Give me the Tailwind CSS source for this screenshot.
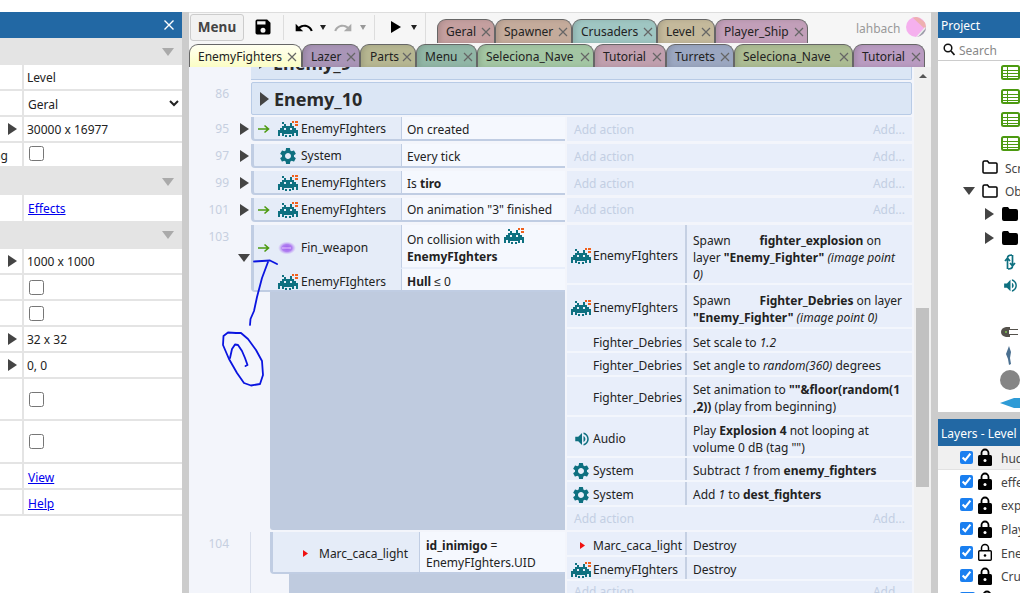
<!DOCTYPE html>
<html lang="en">
<head>
<meta charset="UTF-8">
<title>Event sheet</title>
<script src="https://cdn.jsdelivr.net/npm/@tailwindcss/browser@4"></script>
</head>
<body class="w-[1020px] h-[593px] overflow-hidden bg-white text-[#222] text-[12px] font-['Noto_Sans',sans-serif]">
<!-- shared icons -->
<svg class="hidden">
  <symbol id="invader" viewBox="0 0 20 16">
    <path fill="#0e7080" shape-rendering="crispEdges" d="M4 1h2v2H4zM12 2h2v1h-2zM6 3h2v2H6zM12 3h2v2h-2zM4 5h12v2H4zM2 7h4v2H2zM8 7h4v2H8zM14 7h4v2h-4zM0 9h20v3H0zM0 12h2v3H0zM4 12h12v1H4zM18 12h2v3h-2zM4 13h2v2H4zM14 13h2v2h-2zM7 14h2v2H7zM11 14h2v2h-2z"/>
    <path fill="#f0601c" shape-rendering="crispEdges" d="M14 0h2v2h-2zM17 0h3v2h-3zM17 3h3v2h-3z"/>
  </symbol>
  <symbol id="gear" viewBox="0 0 24 24">
    <path fill="#0e7080" d="M19.14 12.94c.04-.3.06-.61.06-.94 0-.32-.02-.64-.07-.94l2.03-1.58a.49.49 0 0 0 .12-.61l-1.92-3.32a.488.488 0 0 0-.59-.22l-2.39.96c-.5-.38-1.03-.7-1.62-.94l-.36-2.54a.484.484 0 0 0-.48-.41h-3.84c-.24 0-.43.17-.47.41l-.36 2.54c-.59.24-1.13.57-1.62.94l-2.39-.96c-.22-.08-.47 0-.59.22L2.74 8.87c-.12.21-.08.47.12.61l2.03 1.58c-.05.3-.09.63-.09.94s.02.64.07.94l-2.03 1.58a.49.49 0 0 0-.12.61l1.92 3.32c.12.22.37.29.59.22l2.39-.96c.5.38 1.03.7 1.62.94l.36 2.54c.05.24.24.41.48.41h3.84c.24 0 .44-.17.47-.41l.36-2.54c.59-.24 1.13-.56 1.62-.94l2.39.96c.22.08.47 0 .59-.22l1.92-3.32c.12-.22.07-.47-.12-.61l-2.01-1.58zM12 15.6c-1.98 0-3.6-1.62-3.6-3.6s1.62-3.6 3.6-3.6 3.6 1.62 3.6 3.6-1.62 3.6-3.6 3.6z"/>
  </symbol>
  <symbol id="speaker" viewBox="0 0 24 24">
    <path fill="#0e7080" d="M3 9v6h4l5 5V4L7 9H3zM16.5 12c0-1.77-1.02-3.29-2.5-4.03v8.05c1.48-.73 2.5-2.25 2.5-4.02zM14 3.23v2.06c2.89.86 5 3.54 5 6.71s-2.11 5.85-5 6.71v2.06c4.01-.91 7-4.49 7-8.77s-2.99-7.86-7-8.77z"/>
  </symbol>
  <symbol id="arrow" viewBox="0 0 12 10">
    <path fill="none" stroke="#4c9a10" stroke-width="1.600" d="M0 5h10M6.500 1.500 10.500 5l-4 3.500"/>
  </symbol>
  <symbol id="table" viewBox="0 0 19 15">
    <rect x="1" y="1" width="17" height="13" rx="1.500" fill="#fff" stroke="#4c9a10" stroke-width="2"/>
    <path fill="#4c9a10" d="M2 5h15v1H2zM2 8h15v1H2zM2 11h15v1H2zM6 2h1v11H6z"/>
  </symbol>
  <symbol id="folder" viewBox="0 0 16 14">
    <path fill="#fff" stroke="#000" stroke-width="1.500" d="M1 2.500Q1 1 2.500 1h3L7 3h7q1 0 1 1v8q0 1-1 1H2q-1 0-1-1z"/>
  </symbol>
  <symbol id="folder-full" viewBox="0 0 16 14">
    <path fill="#000" d="M0 2q0-2 2-2h4l1.500 2H14q2 0 2 2v8q0 2-2 2H2q-2 0-2-2z"/>
  </symbol>
  <symbol id="lock" viewBox="0 0 14 18">
    <path fill="none" stroke="#000" stroke-width="1.800" d="M3.500 8V5a3.500 3.500 0 0 1 7 0v3"/>
    <rect x="0" y="7" width="14" height="11" rx="1.500" fill="#000"/>
    <circle cx="7" cy="12.500" r="1.500" fill="#fff"/>
  </symbol>
  <symbol id="lock-open" viewBox="0 0 14 18">
    <path fill="none" stroke="#000" stroke-width="1.500" d="M3.500 8V5a3.500 3.500 0 0 1 7 0v3"/>
    <rect x=".7" y="7.700" width="12.600" height="9.600" rx="1" fill="#fff" stroke="#000" stroke-width="1.400"/>
    <circle cx="7" cy="12.500" r="1.300" fill="#000"/>
  </symbol>
  <symbol id="close" viewBox="0 0 10 10">
    <path fill="none" stroke="#666" stroke-width="1.200" d="M1 1l8 8M9 1l-8 8"/>
  </symbol>
</svg>

<div class="relative flex flex-col h-full">
  <div class="h-[12px] shrink-0 bg-white"></div>
  <div class="flex flex-1 min-h-0">

    <!-- properties bar -->
    <aside class="w-[182px] shrink-0 flex flex-col">
      <div class="h-[26px] bg-[#2268a4] flex items-center justify-end pr-[8px]">
        <svg class="w-[10px] h-[10px]" viewBox="0 0 10 10"><path fill="none" stroke="#fff" stroke-width="1.400" d="M.5.5l9 9M9.500.5l-9 9"/></svg>
      </div>
      <div class="h-[27px] bg-[#e4e4e4] flex items-center justify-end pr-[8px]"><span class="border-x-[6px] border-x-transparent border-t-[8px] border-t-[#aaa]"></span></div>
      <div class="h-[26px] flex border-b-2 border-[#e4e4e4]"><div class="w-[24px] border-r-2 border-[#e4e4e4]"></div><div class="pl-[3px] pt-[2px] flex items-center">Level</div></div>
      <div class="h-[26px] flex border-b-2 border-[#e4e4e4]"><div class="w-[24px] border-r-2 border-[#e4e4e4]"></div><select class="flex-1 min-w-0 pl-0 pt-[2px] outline-none"><option>Geral</option></select></div>
      <div class="h-[26px] flex border-b-2 border-[#e4e4e4]"><div class="w-[24px] border-r-2 border-[#e4e4e4] flex items-center justify-end pr-[5px]"><span class="border-y-[6px] border-y-transparent border-l-[9px] border-l-[#444]"></span></div><div class="pl-[3px] pt-[2px] flex items-center">30000 x 16977</div></div>
      <div class="h-[25px] flex border-b-2 border-[#e4e4e4]"><div class="w-[24px] border-r-2 border-[#e4e4e4] flex items-center justify-end pr-[14px] pt-[2px] overflow-hidden"><span class="whitespace-nowrap">ing</span></div><div class="pl-[5px] pb-[3px] flex items-center"><input type="checkbox" class="w-[15px] h-[15px] m-0"></div></div>
      <div class="h-[27px] bg-[#e4e4e4] flex items-center justify-end pr-[8px]"><span class="border-x-[6px] border-x-transparent border-t-[8px] border-t-[#aaa]"></span></div>
      <div class="h-[26px] flex"><div class="w-[24px] border-r-2 border-[#e4e4e4]"></div><div class="pl-[4px] pt-[2px] flex items-center"><a href="#" class="text-[#0000ee] underline">Effects</a></div></div>
      <div class="h-[28px] bg-[#e4e4e4] flex items-center justify-end pr-[8px]"><span class="border-x-[6px] border-x-transparent border-t-[8px] border-t-[#aaa]"></span></div>
      <div class="h-[26px] flex border-b-2 border-[#e4e4e4]"><div class="w-[24px] border-r-2 border-[#e4e4e4] flex items-center justify-end pr-[5px]"><span class="border-y-[6px] border-y-transparent border-l-[9px] border-l-[#444]"></span></div><div class="pl-[3px] pt-[2px] flex items-center">1000 x 1000</div></div>
      <div class="h-[26px] flex border-b-2 border-[#e4e4e4]"><div class="w-[24px] border-r-2 border-[#e4e4e4]"></div><div class="pl-[5px] flex items-center"><input type="checkbox" class="w-[15px] h-[15px] m-0"></div></div>
      <div class="h-[26px] flex border-b-2 border-[#e4e4e4]"><div class="w-[24px] border-r-2 border-[#e4e4e4]"></div><div class="pl-[5px] flex items-center"><input type="checkbox" class="w-[15px] h-[15px] m-0"></div></div>
      <div class="h-[26px] flex border-b-2 border-[#e4e4e4]"><div class="w-[24px] border-r-2 border-[#e4e4e4] flex items-center justify-end pr-[5px]"><span class="border-y-[6px] border-y-transparent border-l-[9px] border-l-[#444]"></span></div><div class="pl-[3px] pt-[2px] flex items-center">32 x 32</div></div>
      <div class="h-[26px] flex border-b-2 border-[#e4e4e4]"><div class="w-[24px] border-r-2 border-[#e4e4e4] flex items-center justify-end pr-[5px]"><span class="border-y-[6px] border-y-transparent border-l-[9px] border-l-[#444]"></span></div><div class="pl-[3px] pt-[2px] flex items-center">0, 0</div></div>
      <div class="h-[42px] flex border-b-2 border-[#e4e4e4]"><div class="w-[24px] border-r-2 border-[#e4e4e4]"></div><div class="pl-[5px] flex items-center"><input type="checkbox" class="w-[15px] h-[15px] m-0"></div></div>
      <div class="h-[43px] flex border-b-2 border-[#e4e4e4]"><div class="w-[24px] border-r-2 border-[#e4e4e4]"></div><div class="pl-[5px] flex items-center"><input type="checkbox" class="w-[15px] h-[15px] m-0"></div></div>
      <div class="h-[26px] flex border-b-2 border-[#e4e4e4]"><div class="w-[24px] border-r-2 border-[#e4e4e4]"></div><div class="pl-[4px] pt-[3px] flex items-center"><a href="#" class="text-[#0000ee] underline">View</a></div></div>
      <div class="h-[26px] flex border-b-2 border-[#e4e4e4]"><div class="w-[24px] border-r-2 border-[#e4e4e4]"></div><div class="pl-[4px] pt-[3px] flex items-center"><a href="#" class="text-[#0000ee] underline">Help</a></div></div>
    </aside>
    <div class="w-[7px] shrink-0 bg-[#ccc]"></div>

    <!-- main column -->
    <main class="w-[742px] shrink-0 flex flex-col min-w-0">
      <div class="h-[32px] shrink-0 bg-[#f6f6f6] border-t border-[#ddd] flex">
        <button class="ml-[1px] mt-[1px] w-[54px] h-[27px] border border-[#ccc] rounded-[3px] bg-[#f2f2f2] font-bold text-[13.5px] text-[#444]">Menu</button>
        <svg class="ml-[9px] mt-[4px] w-[20px] h-[20px]" viewBox="0 0 24 24"><path d="M17 3H5a2 2 0 0 0-2 2v14a2 2 0 0 0 2 2h14a2 2 0 0 0 2-2V7l-4-4zm-5 16a3 3 0 1 1 0-6 3 3 0 0 1 0 6zm3-10H5V5h10v4z"/></svg>
        <div class="ml-[10px] mt-[2px] h-[25px] w-px bg-[#ddd]"></div>
        <svg class="ml-[10px] mt-[5px] w-[20px] h-[20px]" viewBox="0 0 24 24"><path d="M12.500 8c-2.650 0-5.050.99-6.900 2.600L2 7v9h9l-3.620-3.620c1.390-1.160 3.160-1.880 5.120-1.880 3.540 0 6.550 2.310 7.600 5.500l2.370-.78C21.080 11.030 17.150 8 12.500 8z"/></svg>
        <span class="ml-[6px] mt-[12px] self-start border-x-[3px] border-x-transparent border-t-[5px] border-t-[#222]"></span>
        <svg class="ml-[7px] mt-[5px] w-[20px] h-[20px] -scale-x-100" viewBox="0 0 24 24"><path fill="#aaa" d="M12.500 8c-2.650 0-5.050.99-6.900 2.600L2 7v9h9l-3.620-3.620c1.390-1.160 3.160-1.880 5.120-1.880 3.540 0 6.550 2.310 7.600 5.500l2.370-.78C21.080 11.030 17.150 8 12.500 8z"/></svg>
        <span class="ml-[7px] mt-[12px] self-start border-x-[3px] border-x-transparent border-t-[5px] border-t-[#999]"></span>
        <div class="ml-[8px] mt-[2px] h-[25px] w-px bg-[#ddd]"></div>
        <span class="ml-[16px] mt-[8px] self-start border-y-[6px] border-y-transparent border-l-[10px] border-l-black"></span>
        <span class="ml-[10px] mt-[12px] self-start border-x-[3px] border-x-transparent border-t-[5px] border-t-[#222]"></span>
        <div class="ml-[8px] h-[31px] w-px bg-[#ddd]"></div>
        <div class="ml-[11px] mt-[6px] flex h-[24px]">
          <div class="w-[58px] pl-[8px] pr-[3px] pt-[1px] rounded-t-[9px] border border-b-0 border-[#666] bg-[#c49f9f] shadow-[inset_3px_0_4px_rgba(0,0,0,0.1)] flex items-center justify-between">Geral<svg class="w-[10px] h-[10px]"><use href="#close"/></svg></div>
          <div class="w-[77px] pl-[8px] pr-[3px] pt-[1px] rounded-t-[9px] border border-b-0 border-[#666] bg-[#c4ab9b] shadow-[inset_3px_0_4px_rgba(0,0,0,0.1)] flex items-center justify-between">Spawner<svg class="w-[10px] h-[10px]"><use href="#close"/></svg></div>
          <div class="w-[85px] pl-[8px] pr-[3px] pt-[1px] rounded-t-[9px] border border-b-0 border-[#666] bg-[#9fc6c2] shadow-[inset_3px_0_4px_rgba(0,0,0,0.1)] flex items-center justify-between">Crusaders<svg class="w-[10px] h-[10px]"><use href="#close"/></svg></div>
          <div class="w-[58px] pl-[8px] pr-[3px] pt-[1px] rounded-t-[9px] border border-b-0 border-[#666] bg-[#c4b99b] shadow-[inset_3px_0_4px_rgba(0,0,0,0.1)] flex items-center justify-between">Level<svg class="w-[10px] h-[10px]"><use href="#close"/></svg></div>
          <div class="w-[93px] pl-[8px] pr-[3px] pt-[1px] rounded-t-[9px] border border-b-0 border-[#666] bg-[#c29fb9] shadow-[inset_3px_0_4px_rgba(0,0,0,0.1)] flex items-center justify-between">Player_Ship<svg class="w-[10px] h-[10px]"><use href="#close"/></svg></div>
        </div>
        <span class="ml-[48px] mt-[7px] self-start text-[#999]">lahbach</span>
        <svg class="ml-[5px] mt-[4px] w-[20px] h-[20px]" viewBox="0 0 20 20"><defs><clipPath id="av"><circle cx="10" cy="10" r="10"/></clipPath></defs><g clip-path="url(#av)"><rect width="20" height="20" fill="#f5b0ee"/><path d="M6 0 20 13V6L12 0z" fill="#eeb0b0"/><path d="M11 20 20 10v10z" fill="#9aa0a8"/><path d="M10 20 19 10l1 1-8 9z" fill="#eee"/></g></svg>
      </div>
      <div class="h-[23px] shrink-0 bg-[#f6f6f6] flex">
        <div class="w-[113px] pl-[8px] pr-[4px] pt-[1px] rounded-t-[9px] border border-b-0 border-[#666] bg-linear-to-b from-[#fffff0] to-[#fbfdc5] flex items-center justify-between">EnemyFighters<svg class="w-[10px] h-[10px]"><use href="#close"/></svg></div>
        <div class="w-[58px] pl-[8px] pr-[3px] pt-[1px] rounded-t-[9px] border border-b-0 border-[#666] bg-[#a995b7] shadow-[inset_3px_0_4px_rgba(0,0,0,0.1)] flex items-center justify-between">Lazer<svg class="w-[10px] h-[10px]"><use href="#close"/></svg></div>
        <div class="w-[56px] pl-[9px] pr-[3px] pt-[1px] rounded-t-[9px] border border-b-0 border-[#666] bg-[#b6b691] shadow-[inset_3px_0_4px_rgba(0,0,0,0.1)] flex items-center justify-between">Parts<svg class="w-[10px] h-[10px]"><use href="#close"/></svg></div>
        <div class="w-[61px] pl-[8px] pr-[3px] pt-[1px] rounded-t-[9px] border border-b-0 border-[#666] bg-[#91b6a6] shadow-[inset_3px_0_4px_rgba(0,0,0,0.1)] flex items-center justify-between">Menu<svg class="w-[10px] h-[10px]"><use href="#close"/></svg></div>
        <div class="w-[117px] pl-[8px] pr-[3px] pt-[1px] rounded-t-[9px] border border-b-0 border-[#666] bg-[#a3c6a3] shadow-[inset_3px_0_4px_rgba(0,0,0,0.1)] flex items-center justify-between">Seleciona_Nave<svg class="w-[10px] h-[10px]"><use href="#close"/></svg></div>
        <div class="w-[72px] pl-[8px] pr-[3px] pt-[1px] rounded-t-[9px] border border-b-0 border-[#666] bg-[#c09fae] shadow-[inset_3px_0_4px_rgba(0,0,0,0.1)] flex items-center justify-between">Tutorial<svg class="w-[10px] h-[10px]"><use href="#close"/></svg></div>
        <div class="w-[68px] pl-[8px] pr-[3px] pt-[1px] rounded-t-[9px] border border-b-0 border-[#666] bg-[#9ba7c1] shadow-[inset_3px_0_4px_rgba(0,0,0,0.1)] flex items-center justify-between">Turrets<svg class="w-[10px] h-[10px]"><use href="#close"/></svg></div>
        <div class="w-[119px] pl-[8px] pr-[3px] pt-[1px] rounded-t-[9px] border border-b-0 border-[#666] bg-[#acbc93] shadow-[inset_3px_0_4px_rgba(0,0,0,0.1)] flex items-center justify-between">Seleciona_Nave<svg class="w-[10px] h-[10px]"><use href="#close"/></svg></div>
        <div class="w-[72px] pl-[8px] pr-[3px] pt-[1px] rounded-t-[9px] border border-b-0 border-[#666] bg-[#b99bc1] shadow-[inset_3px_0_4px_rgba(0,0,0,0.1)] flex items-center justify-between">Tutorial<svg class="w-[10px] h-[10px]"><use href="#close"/></svg></div>
      </div>

      <!-- event sheet -->
      <div class="flex-1 min-h-0 flex bg-[#f3f5fb]">
        <div class="w-[725px] shrink-0 overflow-hidden">
          <!-- group scrolled off the top -->
          <div class="ml-[62px] w-[661px] h-[13px] overflow-hidden flex items-end bg-[#dbe6f5] border-b border-r border-[#b8cbe6] rounded-br-[2px]">
            <div class="shrink-0 h-[33px] flex items-center pl-[8px] gap-[5px] font-bold text-[18px] leading-none text-[#2a2a2a]"><span class="border-y-[6px] border-y-transparent border-l-[9px] border-l-[#444]"></span>Enemy_9</div>
          </div>
          <div class="mt-[2px] h-[33px] flex">
            <div class="w-[62px] pt-[3px] pr-[22px] text-right text-[#c6cfe0]">86</div>
            <div class="w-[661px] flex items-center pl-[8px] gap-[5px] bg-[#dbe6f5] border border-[#b8cbe6] rounded-[2px] font-bold text-[18px] leading-none text-[#2a2a2a]"><span class="border-y-[7px] border-y-transparent border-l-[9px] border-l-[#444]"></span>Enemy_10</div>
          </div>

          <div class="mt-[2px] h-[24px] flex">
            <div class="w-[62px] flex items-center"><span class="w-[40px] text-right text-[#c6cfe0]">95</span><span class="ml-[11px] border-y-[6px] border-y-transparent border-l-[9px] border-l-[#444]"></span></div>
            <div class="w-[150px] pt-[2px] flex items-center bg-[#e5ecf8] border-l-[3px] border-b-2 border-[#c0cde3] rounded-bl-[4px]"><svg class="ml-[4px] w-[12px] h-[10px] shrink-0"><use href="#arrow"/></svg><svg class="ml-[8px] w-[20px] h-[16px] shrink-0"><use href="#invader"/></svg><span class="ml-[3px]">EnemyFIghters</span></div>
            <div class="w-[164px] pl-[5px] pt-[4px] flex items-center bg-[#f5f8fe] border-l border-b-2 border-[#c0cde3]">On created</div>
            <div class="w-[347px] px-[7px] pt-[2px] flex items-center justify-between bg-[#e8eefa] border-l-2 border-[#f3f5fb] text-[#c3cfe3]"><span>Add action</span><span>Add...</span></div>
          </div>
          <div class="mt-[3px] h-[24px] flex">
            <div class="w-[62px] flex items-center"><span class="w-[40px] text-right text-[#c6cfe0]">97</span><span class="ml-[11px] border-y-[6px] border-y-transparent border-l-[9px] border-l-[#444]"></span></div>
            <div class="w-[150px] pt-[2px] flex items-center bg-[#e5ecf8] border-l-[3px] border-b-2 border-[#c0cde3] rounded-bl-[4px]"><svg class="ml-[24px] w-[20px] h-[20px] shrink-0"><use href="#gear"/></svg><span class="ml-[3px]">System</span></div>
            <div class="w-[164px] pl-[5px] pt-[4px] flex items-center bg-[#f5f8fe] border-l border-b-2 border-[#c0cde3]">Every tick</div>
            <div class="w-[347px] px-[7px] pt-[2px] flex items-center justify-between bg-[#e8eefa] border-l-2 border-[#f3f5fb] text-[#c3cfe3]"><span>Add action</span><span>Add...</span></div>
          </div>
          <div class="mt-[3px] h-[24px] flex">
            <div class="w-[62px] flex items-center"><span class="w-[40px] text-right text-[#c6cfe0]">99</span><span class="ml-[11px] border-y-[6px] border-y-transparent border-l-[9px] border-l-[#444]"></span></div>
            <div class="w-[150px] pt-[2px] flex items-center bg-[#e5ecf8] border-l-[3px] border-b-2 border-[#c0cde3] rounded-bl-[4px]"><svg class="ml-[24px] w-[20px] h-[16px] shrink-0"><use href="#invader"/></svg><span class="ml-[3px]">EnemyFIghters</span></div>
            <div class="w-[164px] pl-[5px] pt-[4px] flex items-center bg-[#f5f8fe] border-l border-b-2 border-[#c0cde3]"><span>Is <b>tiro</b></span></div>
            <div class="w-[347px] px-[7px] pt-[2px] flex items-center justify-between bg-[#e8eefa] border-l-2 border-[#f3f5fb] text-[#c3cfe3]"><span>Add action</span><span>Add...</span></div>
          </div>
          <div class="mt-[3px] h-[24px] flex">
            <div class="w-[62px] flex items-center"><span class="w-[40px] text-right text-[#c6cfe0]">101</span><span class="ml-[11px] border-y-[6px] border-y-transparent border-l-[9px] border-l-[#444]"></span></div>
            <div class="w-[150px] pt-[2px] flex items-center bg-[#e5ecf8] border-l-[3px] border-b-2 border-[#c0cde3] rounded-bl-[4px]"><svg class="ml-[4px] w-[12px] h-[10px] shrink-0"><use href="#arrow"/></svg><svg class="ml-[8px] w-[20px] h-[16px] shrink-0"><use href="#invader"/></svg><span class="ml-[3px]">EnemyFIghters</span></div>
            <div class="w-[164px] pl-[5px] pt-[2px] flex items-center bg-[#f5f8fe] border-l border-b-2 border-[#c0cde3] whitespace-nowrap">On animation "3" finished</div>
            <div class="w-[347px] px-[7px] flex items-center justify-between bg-[#e8eefa] border-l-2 border-[#f3f5fb] text-[#c3cfe3]"><span>Add action</span><span>Add...</span></div>
          </div>

          <!-- event 103 with sub event space -->
          <div class="mt-[3px] h-[305px] flex">
            <div class="w-[62px] relative">
              <span class="block w-[40px] pt-[3px] text-right text-[#c6cfe0]">103</span>
              <span class="absolute left-[49px] top-[29px] border-x-[6px] border-x-transparent border-t-[8px] border-t-[#444]"></span>
            </div>
            <div class="w-[314px] flex flex-col">
              <div class="h-[67px] flex flex-col border-l-[3px] border-b-2 border-[#c0cde3] rounded-bl-[4px]">
                <div class="flex h-[44px]">
                  <div class="w-[147px] pt-[1px] flex items-center bg-[#e5ecf8]"><svg class="ml-[4px] w-[12px] h-[10px] shrink-0"><use href="#arrow"/></svg><svg class="ml-[8px] w-[20px] h-[16px] shrink-0" viewBox="0 0 20 16"><defs><radialGradient id="glow"><stop offset="0" stop-color="#a05cf0"/><stop offset=".55" stop-color="#b080f0"/><stop offset="1" stop-color="#c8a8f8" stop-opacity="0"/></radialGradient></defs><ellipse cx="9" cy="8" rx="9" ry="6.500" fill="url(#glow)"/><rect x="4" y="7.500" width="9" height="1" fill="#e8c8ff"/></svg><span class="ml-[3px]">Fin_weapon</span></div>
                  <div class="w-[164px] pl-[5px] pt-[3px] flex flex-col justify-center bg-[#f5f8fe] border-l border-b-2 border-b-[#e8eefa] border-l-[#c0cde3] leading-[17px]"><span class="flex items-center">On collision with<svg class="ml-[4px] -mt-[6px] w-[20px] h-[16px] shrink-0"><use href="#invader"/></svg></span><b>EnemyFIghters</b></div>
                </div>
                <div class="flex flex-1 min-h-0">
                  <div class="w-[147px] pt-[4px] flex items-center bg-[#e5ecf8]"><svg class="ml-[24px] w-[20px] h-[16px] shrink-0"><use href="#invader"/></svg><span class="ml-[3px]">EnemyFIghters</span></div>
                  <div class="w-[164px] pl-[5px] pt-[4px] flex items-center bg-[#f5f8fe] border-l border-[#c0cde3]"><span><b>Hull</b> ≤ 0</span></div>
                </div>
              </div>
              <div class="ml-[19px] flex-1 bg-[#bfcbdf] rounded-bl-[3px]"></div>
            </div>
            <div class="w-[347px] flex flex-col bg-[#e8eefa] border-l-2 border-[#f3f5fb]">
              <div class="h-[60px] flex border-b-2 border-[#f3f6fc]"><div class="w-[120px] pt-[4px] flex items-center border-r-2 border-[#c5d0e3]"><svg class="ml-[4px] w-[20px] h-[16px] shrink-0"><use href="#invader"/></svg><span class="ml-[2px]">EnemyFIghters</span></div><div class="pl-[6px] pt-[6px] flex items-center leading-[17px]"><span>Spawn<span class="inline-block w-[29px]"></span><b>fighter_explosion</b> on<br>layer <b>"Enemy_Fighter"</b> <i>(image point<br>0)</i></span></div></div>
              <div class="h-[44px] flex border-b-2 border-[#f3f6fc]"><div class="w-[120px] pt-[4px] flex items-center border-r-2 border-[#c5d0e3]"><svg class="ml-[4px] w-[20px] h-[16px] shrink-0"><use href="#invader"/></svg><span class="ml-[2px]">EnemyFIghters</span></div><div class="pl-[6px] pt-[6px] flex items-center leading-[17px]"><span>Spawn<span class="inline-block w-[29px]"></span><b>Fighter_Debries</b> on layer<br><b>"Enemy_Fighter"</b> <i>(image point 0)</i></span></div></div>
              <div class="h-[24px] flex border-b-2 border-[#f3f6fc]"><div class="w-[120px] pt-[5px] flex items-center border-r-2 border-[#c5d0e3] pl-[26px]">Fighter_Debries</div><div class="pl-[6px] pt-[5px] flex items-center">Set scale to&nbsp;<i>1.2</i></div></div>
              <div class="h-[24px] flex border-b-2 border-[#f3f6fc]"><div class="w-[120px] pt-[4px] flex items-center border-r-2 border-[#c5d0e3] pl-[26px]">Fighter_Debries</div><div class="pl-[6px] pt-[4px] flex items-center">Set angle to&nbsp;<i>random(360)</i>&nbsp;degrees</div></div>
              <div class="h-[40px] flex border-b-2 border-[#f3f6fc]"><div class="w-[120px] pt-[3px] flex items-center border-r-2 border-[#c5d0e3] pl-[26px]">Fighter_Debries</div><div class="pl-[6px] pt-[3px] flex items-center leading-[17px]"><span>Set animation to <b>""&amp;floor(random(1<br>,2))</b> (play from beginning)</span></div></div>
              <div class="h-[41px] flex border-b-2 border-[#f3f6fc]"><div class="w-[120px] pt-[4px] flex items-center border-r-2 border-[#c5d0e3]"><svg class="ml-[6px] w-[18px] h-[18px] shrink-0"><use href="#speaker"/></svg><span class="ml-[2px]">Audio</span></div><div class="pl-[6px] pt-[4px] flex items-center leading-[17px]"><span>Play <b>Explosion 4</b> not looping at<br>volume 0 dB (tag "")</span></div></div>
              <div class="h-[24px] flex border-b-2 border-[#f3f6fc]"><div class="w-[120px] pt-[4px] flex items-center border-r-2 border-[#c5d0e3]"><svg class="ml-[4px] w-[20px] h-[20px] shrink-0"><use href="#gear"/></svg><span class="ml-[2px]">System</span></div><div class="pl-[6px] pt-[4px] flex items-center whitespace-pre">Subtract <i>1</i> from <b>enemy_fighters</b></div></div>
              <div class="h-[25px] flex border-b-2 border-[#f3f6fc]"><div class="w-[120px] pt-[3px] flex items-center border-r-2 border-[#c5d0e3]"><svg class="ml-[4px] w-[20px] h-[20px] shrink-0"><use href="#gear"/></svg><span class="ml-[2px]">System</span></div><div class="pl-[6px] pt-[3px] flex items-center whitespace-pre">Add <i>1</i> to <b>dest_fighters</b></div></div>
              <div class="flex-1 px-[7px] flex items-center justify-between text-[#c3cfe3]"><span>Add action</span><span>Add...</span></div>
            </div>
          </div>

          <!-- event 104 -->
          <div class="mt-[2px] h-[70px] flex">
            <div class="w-[62px] flex"><span class="block w-[40px] pt-[3px] text-right text-[#c6cfe0]">104</span><span class="ml-[21px] w-px h-full bg-[#d8deeb]"></span></div>
            <div class="w-[314px] flex flex-col">
              <div class="ml-[19px] h-[42px] flex border-l-[3px] border-b-2 border-[#c0cde3] rounded-bl-[4px]">
                <div class="w-[147px] pt-[3px] flex items-center bg-[#e5ecf8] border-r border-[#c0cde3]"><svg class="ml-[30px] w-[5px] h-[7px] shrink-0" viewBox="0 0 5 7"><path fill="#f01010" d="M0 0l5 3.500L0 7z"/></svg><span class="ml-[11px] whitespace-nowrap">Marc_caca_light</span></div>
                <div class="w-[145px] pl-[6px] pt-[3px] flex flex-col justify-center bg-[#f5f8fe] leading-[17px]"><span><b>id_inimigo</b> =</span><span>EnemyFIghters.UID</span></div>
              </div>
              <div class="ml-[38px] flex-1 bg-[#bfcbdf]"></div>
            </div>
            <div class="w-[347px] flex flex-col bg-[#e8eefa] border-l-2 border-[#f3f5fb]">
              <div class="h-[25px] shrink-0 flex border-b-2 border-[#f3f6fc]"><div class="w-[120px] pt-[4px] flex items-center border-r-2 border-[#c5d0e3]"><svg class="ml-[13px] w-[5px] h-[7px] shrink-0" viewBox="0 0 5 7"><path fill="#f01010" d="M0 0l5 3.500L0 7z"/></svg><span class="ml-[8px] whitespace-nowrap">Marc_caca_light</span></div><div class="pl-[6px] pt-[4px] flex items-center">Destroy</div></div>
              <div class="h-[24px] shrink-0 flex border-b-2 border-[#f3f6fc]"><div class="w-[120px] pt-[3px] flex items-center border-r-2 border-[#c5d0e3]"><svg class="ml-[4px] w-[20px] h-[16px] shrink-0"><use href="#invader"/></svg><span class="ml-[2px]">EnemyFIghters</span></div><div class="pl-[6px] pt-[3px] flex items-center">Destroy</div></div>
              <div class="h-[21px] shrink-0 px-[7px] flex items-center justify-between text-[#c3cfe3]"><span>Add action</span><span>Add...</span></div>
            </div>
          </div>
        </div>
        <!-- scrollbar -->
        <div class="w-[17px] shrink-0 bg-[#f0f0f0] flex flex-col items-center">
          <span class="mt-[7px] border-x-[4px] border-x-transparent border-b-[4px] border-b-[#555]"></span>
          <div class="mt-[230px] w-[13px] h-[179px] bg-[#c1c1c1]"></div>
        </div>
      </div>
    </main>
    <div class="w-[7px] shrink-0 bg-[#ccc]"></div>

    <!-- project and layers bars -->
    <aside class="w-[82px] shrink-0 overflow-hidden flex flex-col whitespace-nowrap">
      <div class="h-[26px] shrink-0 bg-[#2268a4] text-white flex items-center pl-[3px] pt-[2px]">Project</div>
      <div class="h-[23px] shrink-0 flex items-center border-b border-[#ccc] pl-[5px] text-[#888]"><svg class="w-[12px] h-[13px] mr-[4px] shrink-0" viewBox="0 0 12 13"><circle cx="5" cy="5" r="3.800" fill="none" stroke="#111" stroke-width="1.500"/><path d="M8 8l3.500 4" stroke="#111" stroke-width="1.700"/></svg><span class="pt-[3px]">Search</span></div>
      <div class="h-[351px] shrink-0 overflow-hidden">
        <div class="h-[23.6px] flex items-center pl-[63px]"><svg class="w-[19px] h-[15px] shrink-0"><use href="#table"/></svg></div>
        <div class="h-[23.6px] flex items-center pl-[63px]"><svg class="w-[19px] h-[15px] shrink-0"><use href="#table"/></svg></div>
        <div class="h-[23.6px] flex items-center pl-[63px]"><svg class="w-[19px] h-[15px] shrink-0"><use href="#table"/></svg></div>
        <div class="h-[23.6px] flex items-center pl-[63px]"><svg class="w-[19px] h-[15px] shrink-0"><use href="#table"/></svg></div>
        <div class="h-[23.6px] flex items-center pl-[44px]"><svg class="w-[16px] h-[14px] shrink-0"><use href="#folder"/></svg><span class="ml-[7px] pt-[3px] text-[#444]">Scripts</span></div>
        <div class="h-[23.6px] flex items-center pl-[25px]"><span class="border-x-[6px] border-x-transparent border-t-[8px] border-t-[#444]"></span><svg class="ml-[7px] w-[16px] h-[14px] shrink-0"><use href="#folder"/></svg><span class="ml-[7px] pt-[3px] text-[#444]">Objects</span></div>
        <div class="h-[23.6px] flex items-center pl-[47px]"><span class="border-y-[6px] border-y-transparent border-l-[9px] border-l-[#444]"></span><svg class="ml-[8px] w-[16px] h-[14px] shrink-0"><use href="#folder-full"/></svg></div>
        <div class="h-[23.6px] flex items-center pl-[47px]"><span class="border-y-[6px] border-y-transparent border-l-[9px] border-l-[#444]"></span><svg class="ml-[8px] w-[16px] h-[14px] shrink-0"><use href="#folder-full"/></svg></div>
        <div class="h-[23.6px] flex items-center pl-[66px]"><svg class="w-[12px] h-[16px] shrink-0" viewBox="0 0 12 16"><path fill="none" stroke="#0e7080" stroke-width="1.700" d="M3.500 15V4.500M1 7l2.500-3L6 7M8.500 1v10.500M11 9l-2.500 3L6 9M3.500 4Q3.500 1 8 1M8.500 12Q8.500 15 4 15"/></svg></div>
        <div class="h-[23.6px] flex items-center pl-[64px]"><svg class="w-[17px] h-[17px] shrink-0"><use href="#speaker"/></svg></div>
        <div class="h-[23.6px]"></div>
        <div class="h-[23.6px] flex items-center pl-[63px]"><svg class="w-[17px] h-[10px] shrink-0" viewBox="0 0 17 10"><path fill="#55524c" d="M0 5Q0 1 5 0h4v2h8v1H8v4h9v1H9v2H5Q0 9 0 5z"/><circle cx="5" cy="5" r="1" fill="#7ec850"/></svg></div>
        <div class="h-[23.6px] flex items-center pl-[68px]"><svg class="w-[5px] h-[19px] shrink-0" viewBox="0 0 5 19"><path fill="#4a6f90" d="M3 0l2 6-1 6 1 6-2 1-1-6L0 8z"/></svg></div>
        <div class="h-[23.6px] flex items-center pl-[62px]"><span class="w-[20px] h-[20px] shrink-0 rounded-full bg-[#858585]"></span></div>
        <div class="h-[23.6px] flex items-center pl-[62px]"><svg class="w-[20px] h-[10px] shrink-0" viewBox="0 0 20 10"><path fill="#2e9bd6" d="M0 5 14 0h6v10h-6z"/></svg></div>
      </div>
      <div class="h-[7px] shrink-0 bg-[#ccc]"></div>
      <div class="h-[27px] shrink-0 bg-[#2268a4] text-white flex items-center pl-[3px] pt-[3px]">Layers - Level</div>
      <div class="h-[23.6px] shrink-0 flex items-center pl-[22px] bg-[#f0f0f0] border-b border-[#e2e2e2]"><input type="checkbox" checked class="w-[15px] h-[15px] m-0 accent-[#1a7ff0]"><svg class="ml-[5px] w-[14px] h-[18px] shrink-0"><use href="#lock"/></svg><span class="ml-[9px] pt-[3px] text-[#444]">hud</span></div>
      <div class="h-[23.6px] shrink-0 flex items-center pl-[22px]"><input type="checkbox" checked class="w-[15px] h-[15px] m-0 accent-[#1a7ff0]"><svg class="ml-[5px] w-[14px] h-[18px] shrink-0"><use href="#lock"/></svg><span class="ml-[9px] pt-[3px] text-[#444]">effects</span></div>
      <div class="h-[23.6px] shrink-0 flex items-center pl-[22px]"><input type="checkbox" checked class="w-[15px] h-[15px] m-0 accent-[#1a7ff0]"><svg class="ml-[5px] w-[14px] h-[18px] shrink-0"><use href="#lock"/></svg><span class="ml-[9px] pt-[3px] text-[#444]">explosions</span></div>
      <div class="h-[23.6px] shrink-0 flex items-center pl-[22px]"><input type="checkbox" checked class="w-[15px] h-[15px] m-0 accent-[#1a7ff0]"><svg class="ml-[5px] w-[14px] h-[18px] shrink-0"><use href="#lock"/></svg><span class="ml-[9px] pt-[3px] text-[#444]">Player</span></div>
      <div class="h-[23.6px] shrink-0 flex items-center pl-[22px]"><input type="checkbox" checked class="w-[15px] h-[15px] m-0 accent-[#1a7ff0]"><svg class="ml-[5px] w-[14px] h-[18px] shrink-0"><use href="#lock-open"/></svg><span class="ml-[9px] pt-[3px] text-[#444]">Enemy</span></div>
      <div class="h-[23.6px] shrink-0 flex items-center pl-[22px]"><input type="checkbox" checked class="w-[15px] h-[15px] m-0 accent-[#1a7ff0]"><svg class="ml-[5px] w-[14px] h-[18px] shrink-0"><use href="#lock"/></svg><span class="ml-[9px] pt-[3px] text-[#444]">Crusaders</span></div>
      <div class="h-[23.6px] shrink-0 flex items-center pl-[22px]"><input type="checkbox" checked class="w-[15px] h-[15px] m-0 accent-[#1a7ff0]"><svg class="ml-[5px] w-[14px] h-[18px] shrink-0"><use href="#lock"/></svg></div>
    </aside>
  </div>

  <!-- pen annotation drawn over the sheet -->
  <svg class="absolute inset-0 w-[1020px] h-[593px] pointer-events-none" viewBox="0 0 1020 593" fill="none" stroke="#0a14e0" stroke-width="1.800" stroke-linecap="round" stroke-linejoin="round">
    <path d="M254 261.500 270 260.500 277 264M268 262 262 278 257 297 254 311 250.500 319 250 325"/>
    <path d="M236 333 228 332.500 223.500 336 223 345 229 359 237 373 244 383 251 385.500 260 384 263 375 262 361 256 350 248 339 241 333 236 333"/>
    <path d="M230 358 232 349 235 344.500 238 345 242 351 245 358 247.500 365 245.500 366"/>
  </svg>
</div>
</body>
</html>
